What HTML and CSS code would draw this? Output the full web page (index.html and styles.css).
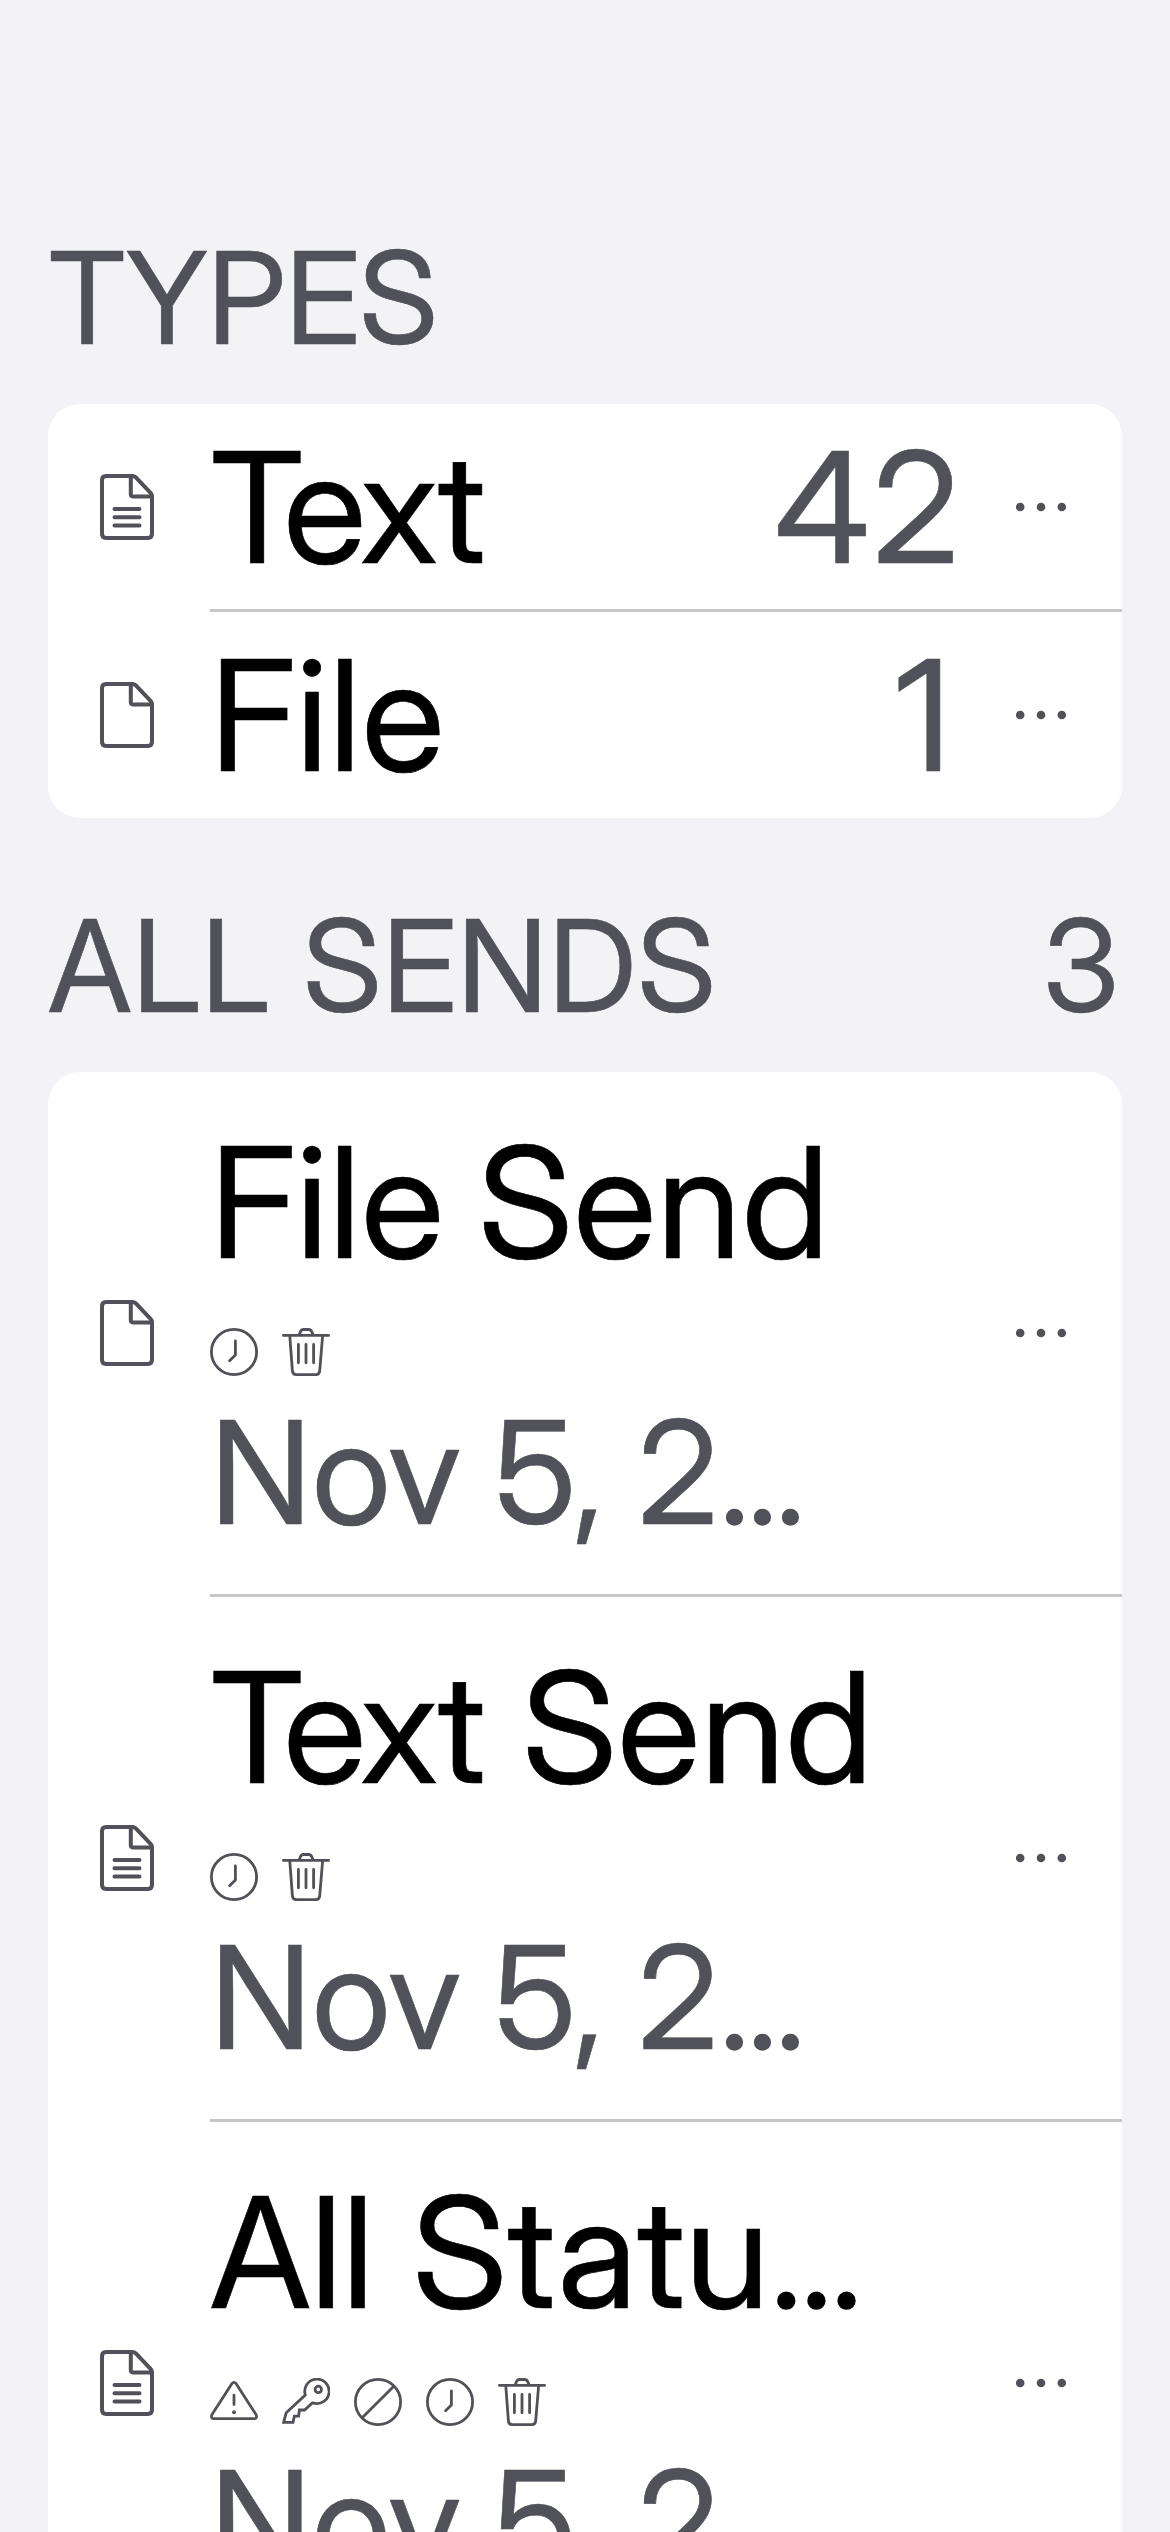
FILE: index.html
```
<!DOCTYPE html>
<html lang="en">
<head>
<meta charset="utf-8">
<title>Sends</title>
<link rel="stylesheet" href="styles.css">
</head>
<body>
<svg class="sprite" aria-hidden="true">
  <symbol id="file" viewBox="0 0 54 66">
    <path d="M32.5 2H6.2Q2 2 2 6.2V59.8Q2 64 6.2 64H47.8Q52 64 52 59.8V22Q52 20.4 50.8 19.2L35.6 3.2Q34.4 2 32.5 2ZM30.8 3V20.3Q30.8 22.4 32.9 22.4H51"/>
  </symbol>
  <symbol id="file-text" viewBox="0 0 54 66">
    <path d="M32.5 2H6.2Q2 2 2 6.2V59.8Q2 64 6.2 64H47.8Q52 64 52 59.8V22Q52 20.4 50.8 19.2L35.6 3.2Q34.4 2 32.5 2ZM30.8 3V20.3Q30.8 22.4 32.9 22.4H51M14.5 35H39.5M14.5 43.3H39.5M14.5 51.5H39.5"/>
  </symbol>
  <symbol id="dots" viewBox="0 0 54 10">
    <circle cx="6.2" cy="5" r="4.3"/><circle cx="27" cy="5" r="4.3"/><circle cx="47.8" cy="5" r="4.3"/>
  </symbol>
  <symbol id="clock" viewBox="0 0 48 48">
    <circle cx="24" cy="24" r="22.6"/><path d="M25.4 13V27L19.6 32.8"/>
  </symbol>
  <symbol id="trash" viewBox="0 0 48 48">
    <path d="M1.4 7.4H46.6M17 7.2L18.5 3.6Q19.4 1.5 21.6 1.5H26.6Q28.8 1.5 29.7 3.6L31.3 7.2M7.8 8L10.4 42.9Q10.7 46.6 14.2 46.6H34Q37.4 46.6 37.7 42.9L40.6 8M16.4 16.5V34.8M24 16.5V34.8M31.6 16.5V34.8"/>
  </symbol>
  <symbol id="warning" viewBox="0 0 48 48">
    <path d="M22 5.4Q24 3.2 26 5.4L46 36.5Q47.6 40.4 44.4 40.6H3.6Q.4 40.4 2 36.5ZM24 17.2V26.6"/><circle class="solid" cx="24" cy="34.3" r="2"/>
  </symbol>
  <symbol id="key" viewBox="0 0 48 48">
    <path stroke-linejoin="miter" d="M23.3 17A12.2 12.2 0 1 1 31 24.9L30.3 24.9L22.6 32H17.4L16.6 38.1H12.4L11 44.4H1.6L4.2 34.8Z"/><circle cx="36.3" cy="11.4" r="3.2"/>
  </symbol>
  <symbol id="ban" viewBox="0 0 48 48">
    <circle cx="24" cy="24" r="22.6"/><path d="M8.2 39.8L39.8 8.2"/>
  </symbol>
</svg>

<main class="page">
  <section>
    <header class="section-header"><h2 class="types">TYPES</h2></header>
    <div class="card">
      <div class="row type-row first">
        <svg class="icon"><use href="#file-text"/></svg>
        <span class="name tight">Text</span>
        <span class="count">42</span>
        <svg class="more"><use href="#dots"/></svg>
      </div>
      <div class="separator"></div>
      <div class="row type-row">
        <svg class="icon"><use href="#file"/></svg>
        <span class="name loose">File</span>
        <span class="count narrow">1</span>
        <svg class="more"><use href="#dots"/></svg>
      </div>
    </div>
  </section>

  <section>
    <header class="section-header spaced"><h2>ALL SENDS</h2><span>3</span></header>
    <div class="card">
      <div class="row send-row">
        <svg class="icon"><use href="#file"/></svg>
        <div class="details">
          <div class="name title">File Send</div>
          <div class="badges">
            <svg><use href="#clock"/></svg>
            <svg><use href="#trash"/></svg>
          </div>
          <div class="date">Nov 5, 2<span class="ellipsis">…</span></div>
        </div>
        <svg class="more"><use href="#dots"/></svg>
      </div>
      <div class="separator"></div>
      <div class="row send-row">
        <svg class="icon"><use href="#file-text"/></svg>
        <div class="details">
          <div class="name title-text"><span class="tight">Text</span> Send</div>
          <div class="badges">
            <svg><use href="#clock"/></svg>
            <svg><use href="#trash"/></svg>
          </div>
          <div class="date">Nov 5, 2<span class="ellipsis">…</span></div>
        </div>
        <svg class="more"><use href="#dots"/></svg>
      </div>
      <div class="separator"></div>
      <div class="row send-row">
        <svg class="icon"><use href="#file-text"/></svg>
        <div class="details">
          <div class="name">All Statu<span class="ellipsis">…</span></div>
          <div class="badges">
            <svg><use href="#warning"/></svg>
            <svg><use href="#key"/></svg>
            <svg><use href="#ban"/></svg>
            <svg><use href="#clock"/></svg>
            <svg><use href="#trash"/></svg>
          </div>
          <div class="date">Nov 5, 2<span class="ellipsis">…</span></div>
        </div>
        <svg class="more"><use href="#dots"/></svg>
      </div>
    </div>
  </section>
</main>
</body>
</html>
```
FILE: styles.css
```
:root {
  --background: #f2f2f7;
  --primary: #000;
  --secondary: #515159;
  --separator: #c6c6c6;
}

* {
  box-sizing: border-box;
}

body {
  margin: 0;
  background: var(--background);
  color: var(--secondary);
  font-family: "Inter Display", Inter, "Liberation Sans", sans-serif;
  font-weight: 400;
  -webkit-text-stroke: 0.6px currentColor;
}

.sprite {
  display: none;
}

.page {
  height: 2532px;
  padding: 220px 48px 0;
  overflow: hidden;
}

/* Section headers */

.section-header {
  display: flex;
  justify-content: space-between;
  height: 184px;
  padding-right: 3px;
  font-size: 128px;
  line-height: 155px;
}

.section-header.spaced {
  height: 254px;
  padding-top: 70px;
}

.section-header h2 {
  margin: 0;
  font-size: inherit;
  font-weight: inherit;
  letter-spacing: 0.6px;
  white-space: nowrap;
}

.section-header .types {
  letter-spacing: -0.4px;
}

/* Cards */

.card {
  background: #fff;
  border-radius: 32px;
}

.separator {
  height: 3px;
  margin-left: 162px;
  background: var(--separator);
}

.row {
  display: flex;
  align-items: center;
  padding: 0 54px 0 52px;
}

.type-row {
  height: 206px;
}

.type-row.first {
  height: 205px;
  padding-top: 1px;
}

.send-row {
  height: 522px;
}

.icon {
  flex: none;
  width: 54px;
  height: 66px;
  margin-right: 56px;
  fill: none;
  stroke: var(--secondary);
  stroke-width: 4;
  stroke-linecap: round;
  stroke-linejoin: round;
}

.more {
  flex: none;
  width: 54px;
  height: 10px;
  fill: var(--secondary);
}

.name {
  flex: 1;
  color: var(--primary);
  font-size: 154px;
  line-height: 186px;
  white-space: nowrap;
}

.tight {
  letter-spacing: -2.5px;
}

.loose {
  letter-spacing: 1px;
}

.count {
  margin-right: 52px;
  font-size: 154px;
  line-height: 186px;
  letter-spacing: 3px;
}

.count.narrow {
  margin-right: 60px;
}

/* Send details */

.details {
  flex: 1;
  min-width: 0;
}

.title {
  letter-spacing: 0.8px;
  word-spacing: -5.7px;
}

.title-text {
  letter-spacing: 0.6px;
}

.badges {
  display: flex;
  gap: 24px;
  margin: 33px 0 9px;
}

.badges svg {
  width: 48px;
  height: 48px;
  fill: none;
  stroke: var(--secondary);
  stroke-width: 2.8;
  stroke-linecap: round;
  stroke-linejoin: round;
}

.solid {
  fill: var(--secondary);
  stroke: none;
}

.date {
  font-size: 143px;
  line-height: 173px;
  letter-spacing: 0.4px;
  word-spacing: -3.5px;
  white-space: nowrap;
}

.ellipsis {
  margin-left: 2px;
  font-size: 0.89em;
  line-height: 0;
  letter-spacing: 0;
  -webkit-text-stroke-width: 1.6px;
}
```
